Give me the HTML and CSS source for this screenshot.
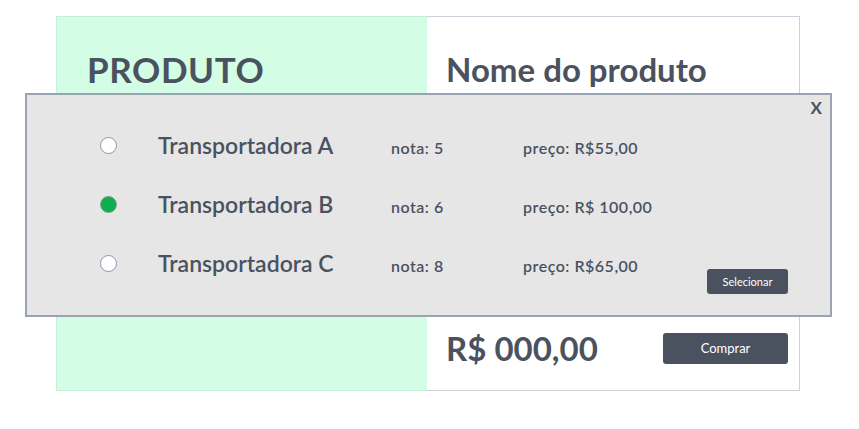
FILE: index.html
```html
<!DOCTYPE html>
<html lang="pt">
<head>
<meta charset="utf-8">
<title>Produto</title>
<link rel="stylesheet" href="styles.css">
</head>
<body>
<div class="page">
  <div class="card">
    <div class="card-left">
      <h1 class="label">PRODUTO</h1>
    </div>
    <div class="card-right">
      <h2 class="name">Nome do produto</h2>
      <div class="buy-row">
        <span class="price">R$ 000,00</span>
        <button class="btn btn-buy">Comprar</button>
      </div>
    </div>
  </div>

  <div class="modal">
    <span class="close">X</span>
    <div class="options">
      <span class="radio"></span>
      <span class="carrier">Transportadora A</span>
      <span class="meta">nota: 5</span>
      <span class="meta">preço: R$55,00</span>
      <span></span>

      <span class="radio checked"></span>
      <span class="carrier">Transportadora B</span>
      <span class="meta">nota: 6</span>
      <span class="meta">preço: R$ 100,00</span>
      <span></span>

      <span class="radio"></span>
      <span class="carrier">Transportadora C</span>
      <span class="meta">nota: 8</span>
      <span class="meta">preço: R$65,00</span>
      <button class="btn btn-select">Selecionar</button>
    </div>
  </div>
</div>
</body>
</html>
```

FILE: styles.css
```css
* { box-sizing: border-box; }

html, body {
  margin: 0;
  padding: 0;
  background: #ffffff;
  font-family: Lato, "Open Sans", sans-serif;
  color: #4a5260;
}

.page {
  position: relative;
  width: 859px;
  height: 429px;
  padding: 16px 0 0 56px;
}

.card {
  display: flex;
  width: 744px;
  height: 375px;
  border: 1px solid #c9d1da;
}

.card-left {
  width: 371px;
  margin: -1px 0 -1px -1px;
  background: #d4fde6;
  border: 1px solid #c6eedc;
  border-right: none;
  padding: 32px 0 0 30px;
}

.label {
  margin: 0;
  font-size: 35px;
  font-weight: 700;
  line-height: 40px;
  letter-spacing: 0.6px;
}

.card-right {
  flex: 1;
  display: flex;
  flex-direction: column;
  justify-content: space-between;
  padding: 32px 11px 23px 19px;
}

.name {
  margin: 0;
  font-size: 33px;
  font-weight: 700;
  line-height: 40px;
}

.buy-row {
  display: flex;
  align-items: center;
  justify-content: space-between;
}

.price {
  font-size: 33px;
  font-weight: 700;
  line-height: 38px;
}

.btn {
  border: none;
  background: #4a5260;
  color: #ffffff;
  font-family: Lato, "Open Sans", sans-serif;
  border-radius: 3px;
  cursor: pointer;
}

.btn-buy {
  width: 125px;
  height: 31px;
  font-size: 13px;
}

.modal {
  position: absolute;
  left: 25px;
  top: 93px;
  width: 807px;
  height: 224px;
  background: #e6e6e6;
  border: 2px solid #99a3b2;
  padding: 21px 42px 20px 73px;
}

.close {
  position: absolute;
  right: 8px;
  top: 3px;
  font-size: 17px;
  font-weight: 700;
  line-height: 20px;
}

.options {
  display: grid;
  grid-template-columns: 58px 233px 132px 1fr auto;
  grid-auto-rows: 59px;
  align-items: center;
}

.radio {
  width: 17px;
  height: 17px;
  border-radius: 50%;
  background: #ffffff;
  border: 1px solid #8c96a8;
}

.radio.checked {
  background: #0bb04b;
}

.carrier {
  font-size: 23px;
  font-weight: 600;
  padding-bottom: 2px;
}

.meta {
  font-size: 16px;
  font-weight: 600;
  letter-spacing: 0.5px;
  padding-top: 4px;
}

.btn-select {
  align-self: end;
  margin-bottom: -1px;
  width: 81px;
  height: 25px;
  font-size: 11px;
}
```
